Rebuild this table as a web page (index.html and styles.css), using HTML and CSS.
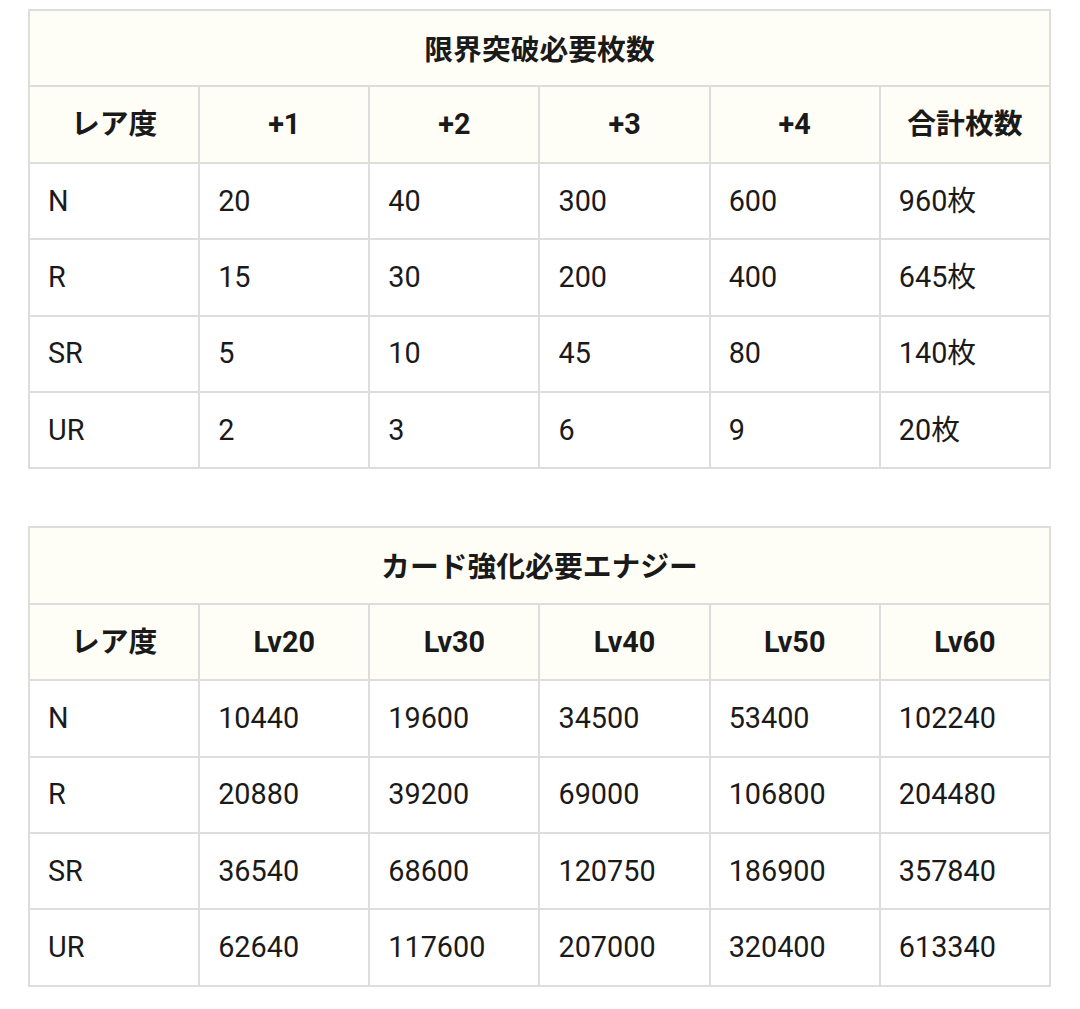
FILE: index.html
```html
<!DOCTYPE html>
<html lang="ja">
<head>
<meta charset="utf-8">
<link rel="stylesheet" href="styles.css">
</head>
<body>
<div class="page">
<table class="tbl">
  <tr><th class="title" colspan="6">限界突破必要枚数</th></tr>
  <tr><th>レア度</th><th>+1</th><th>+2</th><th>+3</th><th>+4</th><th>合計枚数</th></tr>
  <tr><td>N</td><td>20</td><td>40</td><td>300</td><td>600</td><td>960枚</td></tr>
  <tr><td>R</td><td>15</td><td>30</td><td>200</td><td>400</td><td>645枚</td></tr>
  <tr><td>SR</td><td>5</td><td>10</td><td>45</td><td>80</td><td>140枚</td></tr>
  <tr><td>UR</td><td>2</td><td>3</td><td>6</td><td>9</td><td>20枚</td></tr>
</table>
<table class="tbl">
  <tr><th class="title" colspan="6">カード強化必要エナジー</th></tr>
  <tr><th>レア度</th><th>Lv20</th><th>Lv30</th><th>Lv40</th><th>Lv50</th><th>Lv60</th></tr>
  <tr><td>N</td><td>10440</td><td>19600</td><td>34500</td><td>53400</td><td>102240</td></tr>
  <tr><td>R</td><td>20880</td><td>39200</td><td>69000</td><td>106800</td><td>204480</td></tr>
  <tr><td>SR</td><td>36540</td><td>68600</td><td>120750</td><td>186900</td><td>357840</td></tr>
  <tr><td>UR</td><td>62640</td><td>117600</td><td>207000</td><td>320400</td><td>613340</td></tr>
</table>
</div>
</body>
</html>
```
FILE: styles.css
```css
html, body {
  margin: 0;
  padding: 0;
  background: #ffffff;
}
.page {
  padding: 9px 29px 0 28px;
  display: flex;
  flex-direction: column;
  gap: 57px;
  font-family: Roboto, "Noto Sans CJK JP", sans-serif;
  color: #1a1a1a;
}
.tbl {
  width: 1023px;
  border-collapse: collapse;
  table-layout: fixed;
  font-size: 28.8px;
}
.tbl th, .tbl td {
  border: 2px solid #dddddd;
  height: 76.4px;
  padding: 0 18px;
  box-sizing: border-box;
  text-align: left;
  font-weight: 400;
  line-height: 1.2;
}
.tbl th {
  background: #fffef6;
  text-align: center;
  font-weight: 700;
}
.tbl .title {
  font-family: "Noto Sans CJK JP", sans-serif;
}
```
